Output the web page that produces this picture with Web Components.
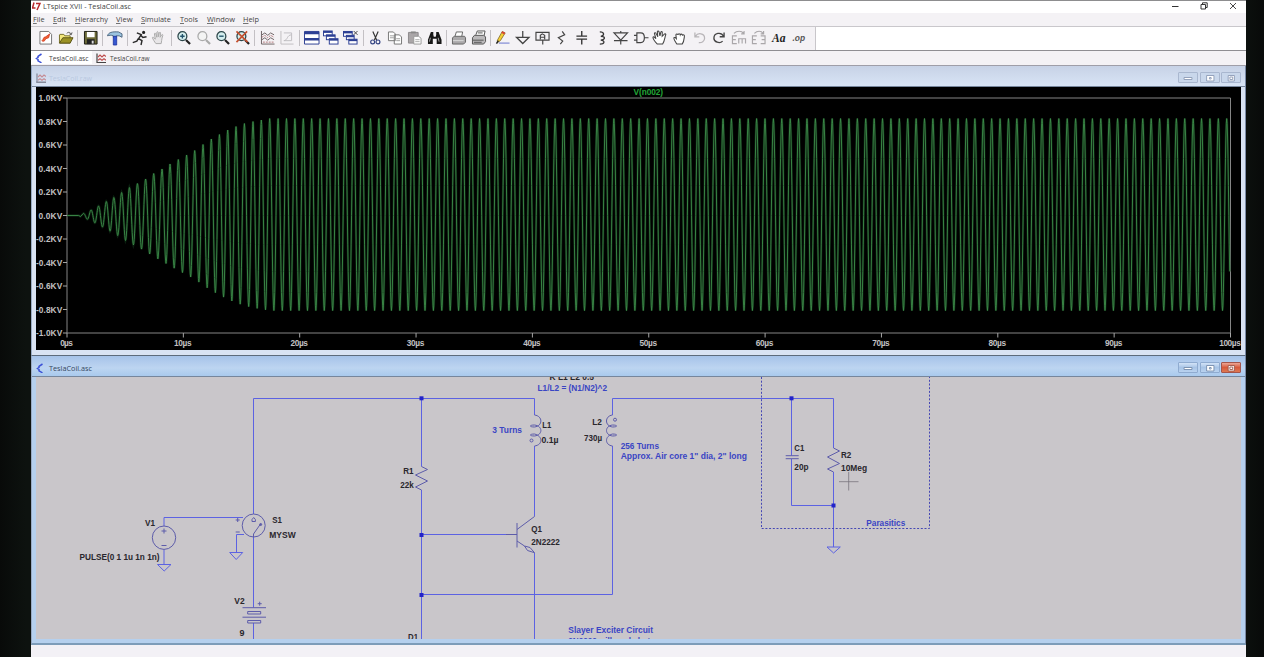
<!DOCTYPE html>
<html lang="en">
<head>
<meta charset="utf-8">
<title>LTspice XVII - TeslaCoil.asc</title>
<style>
html,body{margin:0;height:100%;overflow:hidden;background:#0a0d0c;font-family:"Open Sans","Noto Sans",sans-serif}
</style>
</head>
<body>
<spice-app></spice-app>
<script>
const define = (name, render) => customElements.define(name, class extends HTMLElement {
  connectedCallback() {
    if (this.shadowRoot) return;
    this.attachShadow({ mode: 'open' }).innerHTML = render(this);
  }
});

/* One line of text set to an exact width; "_" marks the access key. */
define('fit-text', el => {
  const w = +el.getAttribute('w'), size = el.getAttribute('size') || 7.4;
  const t = el.getAttribute('text').replace(/_(.)/, '<tspan text-decoration="underline">$1</tspan>');
  return `<style>:host{display:block;flex:none;width:${w}px;height:12px}svg{display:block;overflow:visible}</style>
  <svg width="${w}" height="12"><text y="9" font-size="${size}" fill="currentColor" textLength="${w}" lengthAdjust="spacingAndGlyphs">${t}</text></svg>`;
});

const mag = (c, inner) => `<path d="M10.3 10.2l4.2 4.3" stroke="${c === 'g' ? '#aaa' : '#222'}" stroke-width="2.2"/><circle cx="6.6" cy="6.4" r="4.6" fill="${c === 'g' ? '#f4f4f4' : '#d4eeee'}" stroke="${c === 'g' ? '#aaa' : '#2b4548'}" stroke-width="1.3"/>${inner}`;
const win = (x, y, w, h) => `<rect x="${x}" y="${y}" width="${w}" height="${h}" fill="#fff" stroke="#2c3f94"/><path d="M${x} ${y + 1}h${w}" stroke="#2c3f94" stroke-width="2"/>`;
const hand = 'M5 14C3.5 12 2 9.5 1.5 8c0-1 1-1 1.500 0l1.500 1.500L3.500 4c0-1 1.200-1 1.500 0l1 3.500V2.500c0-1 1.400-1 1.500 0V7l1-4c.3-1 1.500-.8 1.400.2L9.400 7.500l1.600-2.500c.6-.8 1.600-.2 1.200.7-.8 2-1 3.300-1.200 5L10.500 14z';
const ICONS = {
  new: '<path d="M2 1.500h9l3 3v10H2z" fill="#fff" stroke="#666" stroke-width=".9"/><path d="M4 11c2-1 1-4 4-4l4-3-1 4-3 1c-1 3-3 3-4 2z" fill="#f0642f" stroke="#cf3320" stroke-width=".8"/>',
  open: '<path d="M1.500 5V13.500h11V6H7L6 4.500H2z" fill="#f4e87d" stroke="#77702b"/><path d="M1.500 13.500L5 8h10.500l-3 5.500z" fill="#9b9225" stroke="#5b5516"/><path d="M9 3.500c2-2 4-1 4.500 1M14.500 2.500l-.8 2.300-2-.8" fill="none" stroke="#555"/>',
  save: '<path d="M1.500 1.500h13v13h-13z" fill="#6d6b38" stroke="#1d1d14"/><path d="M4 2h8v5.500H4z" fill="#fff"/><path d="M4 9.500h8v5H4z" fill="#222"/><path d="M9 11h2v3H9z" fill="#ddd"/>',
  hammer: '<path d="M.5 6C1.500 2.500 5 1.500 12 2L15.500 4v3.500l-3-1.500H9.500v1.500h-3V6C4 5 2.500 5.500.5 6z" fill="#9cc3df" stroke="#445d76" stroke-width=".9"/><path d="M6.500 6.500h3.500v9H6.500z" fill="#3558d0" stroke="#1b2f9d" stroke-width=".8"/>',
  run: '<circle cx="12" cy="2.500" r="1.600" fill="#222"/><path d="M5 3l4.500 1.700-2.700 4.300 3.500 2-1 4.500M6.500 9L5 11.500.8 13M9 5.500l2.200 2.300 3.800-.8" fill="none" stroke="#2c2c2c" stroke-width="1.500"/>',
  halt: `<path d="${hand}" fill="#e8e6e8" stroke="#aaa"/>`,
  zin: mag('k', '<path d="M4.300 6.400h4.600M6.600 4.100v4.600" stroke="#23536b" stroke-width="1.400"/>'),
  zpan: mag('g', ''),
  zout: mag('k', '<path d="M4.300 6.400h4.600" stroke="#23536b" stroke-width="1.400"/>'),
  zfit: mag('k', '<path d="M1.500 1.500L13 12.500M12.500 1.500l-11 11" stroke="#c4502f" stroke-width="1.700"/>'),
  auto: '<path d="M1.500 1v13.500H15M2 5l3-2 3 2.500L11 3l3.500 2M2 10l3-2 3 2.500L11 8l3.500 2" fill="none" stroke="#6d6264"/><path d="M2 7.500l3-2 3 2.500 3-2.500 3.500 2M3 12.500h12" fill="none" stroke="#b4797c" stroke-dasharray="2 1"/>',
  plot: '<path d="M2 1v13.500h13M5 3h8v8H5M5 11c4 0 3-6 8-6" fill="none" stroke="#c0bec2"/>',
  tile: `<path d="M.5 1.500h15v13H.5z" fill="#fff" stroke="#2c3f94"/><path d="M.5 3h15M.5 9.500h15" stroke="#2c3f94" stroke-width="2.600"/>`,
  casc: win(.5, 1, 9, 5) + win(3.5, 5, 9, 5) + win(6.500, 9, 9, 5.500),
  close: win(.5, 1.5, 9, 5) + win(3.500, 5.500, 8, 4.500) + win(6, 9.500, 8.500, 5) + '<path d="M11 1l4 4M15 1l-4 4" stroke="#444"/>',
  cut: '<path d="M5 1.500l4 9M10.500 1.500l-4 9" stroke="#333" stroke-width="1.200"/><circle cx="4.800" cy="12.300" r="2" fill="none" stroke="#304080" stroke-width="1.200"/><circle cx="10.300" cy="12.300" r="2" fill="none" stroke="#304080" stroke-width="1.200"/>',
  copy: '<path d="M1.500 2h5l2 2v7h-7zM7.500 5h5l2.500 2v7.500H7.500z" fill="#fff" stroke="#777"/><path d="M3 6h4M3 8h4M9.500 9h4M9.500 11h4" stroke="#888" stroke-width=".8"/>',
  paste: '<path d="M1.500 2.500h10v11h-10z" fill="#aaa6a8" stroke="#8c898c"/><path d="M4 1.500h5v2H4z" fill="#888"/><path d="M7 6.500h5l2.500 2v6H7z" fill="#fff" stroke="#999"/><path d="M8.500 10h4.500M8.500 12h4.500" stroke="#999" stroke-width=".8"/>',
  find: '<path d="M4 2h2.500v3L7 7h2l.5-2V2H12l3 8v4.500h-5V9H6v5.500H1V10z" fill="#171717"/><path d="M3.500 8l-1 4M11.500 8l1 4" stroke="#aaa"/>',
  print: '<path d="M4 7l1.500-5h6.500l-1 5" fill="#fff" stroke="#666"/><path d="M1.500 8l2-1.500H14L15 8v4.500l-2 2H1.500z" fill="#aaa8aa" stroke="#666"/><path d="M2 11h11" stroke="#ddd"/>',
  setup: '<path d="M5 5l1.500-4h8l-1 5" fill="#fff" stroke="#555"/><path d="M1.500 8l2-2.500H13L15 7v5l-2 2.500H1.500z" fill="#bbb9bb" stroke="#555"/><path d="M2 10.500h11M3 12.700h8M7 3h5" stroke="#555"/>',
  wire: '<path d="M2.500 10.500L7.500 1.500l3 1.500-5 8-3 2z" fill="#f5cf35" stroke="#7c6422" stroke-width=".8"/><path d="M7.500 1.200l3 1.700-1 1.700-3-1.700z" fill="#d84438"/><path d="M1.500 14l2-3" stroke="#222" stroke-width="1.500"/><path d="M4 13.500h11" stroke="#6673cc"/>',
  gnd: '<path d="M8 1v6M1.500 7.500h13L8 14z" fill="none" stroke="#444" stroke-width="1.300"/>',
  label: '<path d="M1 2.500h13.500v8H1zM8 10.500V15M5.500 9.500V5.500l2-1.500 2.500 1.500v4M5.500 7.500H10" fill="none" stroke="#444" stroke-width="1.200"/>',
  res: '<path d="M8.500 1.500L11 5 4.500 8l4.500 3.500-2.500 3" fill="none" stroke="#444" stroke-width="1.200"/>',
  cap: '<path d="M8 1v5M8 9.500V15M2.500 6.300h11M2.500 9.400h11" fill="none" stroke="#333" stroke-width="1.400"/>',
  ind: '<path d="M6 2c5 0 5 4 1 4.500 5 0 5 3.500 0 4 5 .5 4 4-1 4" fill="none" stroke="#333" stroke-width="1.300"/>',
  dio: '<path d="M1 3h14L8 10.500zM1 11h14M8 1v2M8 11v4" fill="none" stroke="#444" stroke-width="1.200"/>',
  gate: '<path d="M4 3h4c5 0 5 10 0 10H4zM1 5.500h3M1 10.500h3M12 8h4" fill="none" stroke="#444" stroke-width="1.200"/>',
  move: `<path d="M5.500 14.500C3 12 1 9 1 7.500c.5-1 1.500-.5 3 1.500L2.500 3.500c0-1 1.300-1 1.700 0L6 7 5.500 1.800c.2-1 1.400-1 1.700 0L8.200 6l1-4c.4-.8 1.400-.6 1.400.3L10.500 6.500 13 4c.8-.5 1.500.2 1.200 1-1 2-1 6-3.200 9.500z" fill="#fff" stroke="#444" stroke-width="1.100"/>`,
  drag: '<path d="M5 14.500C3.500 12 1.500 9.500 2 8c1-1 2 .5 2.500 1L4 5c.5-1.500 2-1 2.200 0 .2-1.500 2-1.500 2.300 0 .4-1 2-1 2.300.3 1-.8 2.200 0 2 1.200C12.500 9 12.500 12 10.500 14.500z" fill="#fff" stroke="#444" stroke-width="1.100"/>',
  undo: '<path d="M3 2.500V7h4.500M3.500 6.500C6 2.500 13 3 13 8.500c0 3-3 5-6 4.500" fill="none" stroke="#b8b5b8" stroke-width="1.300"/>',
  redo: '<path d="M13.500 2.500V7H9M13 6.500C10.500 1.500 3 3 3 8.500c0 4 6 6 9 3" fill="none" stroke="#444" stroke-width="1.400"/>',
  mirror: '<path d="M6 6H1.500v8H6M1.500 10H5M8 14V9h7v5M11.500 9v5M3 3.500c3-3 8-3 10 0M13.500 1v3h-3" fill="none" stroke="#aaa7aa" stroke-width="1.200"/>',
  rotate: '<path d="M6 6H1.500v8H6M1.500 10H5M10 6h4.500v8H10M14.500 10H11M3.500 3.500c3-3 7-3 9 0M13 1v3h-3" fill="none" stroke="#aaa7aa" stroke-width="1.200"/>',
  text: '<text x="2" y="12.500" font-family="Liberation Serif,serif" font-style="italic" font-weight="700" font-size="13" fill="#222" textLength="14" lengthAdjust="spacingAndGlyphs">Aa</text>',
  op: '<text x="2.500" y="11" font-family="Liberation Sans,sans-serif" font-style="italic" font-weight="700" font-size="10" fill="#555" textLength="13" lengthAdjust="spacingAndGlyphs">.op</text>'
};
define('tool-icon', el => `<style>:host{display:flex;flex:none;width:19.63px;justify-content:center}svg{display:block;width:15.500px;height:15.500px;overflow:visible}</style>
  <svg viewBox="0 0 16 16" fill="none">${ICONS[el.getAttribute('name')]}</svg>`);
define('tool-sep', () => `<style>:host{display:flex;flex:none;width:5px;justify-content:center}i{width:1px;height:16px;background:#c3c0c4}</style><i></i>`);

define('tool-bar', () => {
  const items = 'new open | save | hammer | run halt | zin zpan zout zfit | auto plot | tile casc close | cut copy paste find | print setup | wire gnd label res cap ind dio gate move drag undo redo mirror rotate text op'.split(' ');
  return `<style>:host{display:flex;height:23px;border-top:1px solid #c9c7cb;border-bottom:1px solid #8f8e92;background:#fff}
  div{display:flex;align-items:center;box-sizing:border-box;width:785px;padding:0 0 1px 5.200px;background:#f4f2f5;border-right:1px solid #c8c6ca}</style>
  <div>${items.map(n => n === '|' ? '<tool-sep></tool-sep>' : `<tool-icon name="${n}"></tool-icon>`).join('')}</div>`;
});

define('title-bar', () => `<style>:host{display:flex;align-items:center;height:12px;border-top:1px solid #8d8d8f;background:#fff;color:#444;padding-right:8px}
  .logo{width:9px;height:9px;margin:0 2px 2px 1px}fit-text{margin:0 auto 2px 0}.c{width:10px;height:10px;margin:0 0 3px 19px}</style>
  <svg class="logo" viewBox="0 0 9 9"><path d="M2 .5L0.500 6H3.500M4 1.500H8L5 8" stroke="#b72a2d" stroke-width="1.500" fill="none"/></svg>
  <fit-text text="LTspice XVII - TeslaCoil.asc" w="88" size="7.500"></fit-text>
  <svg class="c" viewBox="0 0 10 10"><path d="M2 5.500h6.500" stroke="#333"/></svg>
  <svg class="c" viewBox="0 0 10 10" fill="none" stroke="#333"><path d="M2 3.500h4.500V8H2zM3.500 3.500V1.800H8.200V6.500H6.500"/></svg>
  <svg class="c" viewBox="0 0 10 10"><path d="M2 2l6 6M8 2L2 8" stroke="#333" stroke-width=".9"/></svg>`);

define('menu-bar', () => {
  const m = [['_File', 11.5, 8.5], ['_Edit', 13, 8.5], ['_Hierarchy', 33, 8.7], ['_View', 16.5, 8.5], ['_Simulate', 29.8, 8.6], ['_Tools', 18, 9], ['_Window', 28, 8.7], ['_Help', 16, 0]];
  return `<style>:host{display:flex;height:13px;padding-left:2px;background:#f4f2f5;color:#444}</style>` +
    m.map(([t, w, g]) => `<fit-text text="${t}" w="${w}" style="margin-right:${g}px"></fit-text>`).join('');
});

const MOON = '<path d="M6.500 1L3 3.300V4.500L1.500 5.500 3 6.500V7.800L6.500 9.800" fill="none" stroke="#3b50d6" stroke-width="1.500"/>';
const RAW = c => `<path d="M1 .5v9h9" fill="none" stroke="${c}" stroke-width="1.200"/><path d="M2 4l2-2 2 2 2-2 2 1.500M2 7.300l2-1.500 2 1.500 2-1.500 2 1.500" fill="none" stroke="#bd4b4b" stroke-width="1.100"/>`;

define('doc-tabs', () => `<style>:host{display:flex;height:14px;background:#f4f2f5;border-bottom:1px solid #9f9ea8;color:#444}
  div{display:flex;align-items:center;padding:0 4px 0 4px;height:13px}.on{background:#fff;width:53px}svg{width:10px;height:10px;margin-right:4px;flex:none}</style>
  <div class="on"><svg viewBox="0 0 10 10">${MOON}</svg><fit-text text="TeslaCoil.asc" w="39.500" size="7"></fit-text></div>
  <div><svg viewBox="0 0 10 10">${RAW('#444')}</svg><fit-text text="TeslaCoil.raw" w="39.500" size="7"></fit-text></div>`);

define('win-button', el => {
  const hot = el.hasAttribute('hot'), dim = el.hasAttribute('dim');
  const g = { min: '<path d="M4.500 6.500h7v-2h-7z"/>', max: '<path d="M5 2.500h6.500V8H5zM7.500 4.500h1.500V6H7.500z"/>', close: '<path d="M5.500 2.500h5.500V8H5.500zM7 4h2.500v2.500H7z"/>' }[el.getAttribute('kind')];
  return `<style>:host{display:block;width:20px;height:11px;box-sizing:border-box;border:1px solid ${hot ? '#a4554b' : dim ? '#a9b7cf' : '#8fabd0'};border-radius:1px;
  background:${hot ? 'linear-gradient(#eda695,#d75a3c 50%,#dd7852)' : dim ? '#c9d7eb' : 'linear-gradient(#d3e3f7,#a8c4e6 50%,#b9d2ef)'}}svg{display:block;width:18px;height:10px}</style>
  <svg viewBox="0 0 16 10" preserveAspectRatio="none" fill="#fff" stroke="${hot ? '#9a5145' : dim ? '#8796b2' : '#6f86a8'}" stroke-width=".8">${g}</svg>`;
});

/* MDI child window: caption above the slotted client area. */
define('mdi-window', el => {
  const act = el.hasAttribute('active');
  return `<style>:host{display:flex;flex-direction:column;box-sizing:border-box;padding:0 4px;background:${act ? '#b5d0ee' : '#d9e3f3'};border-left:1px solid #9aabc4;border-right:1px solid #7a8aa6}
  header{display:flex;align-items:center;height:21px;margin:0 -4px;padding:3px 4px 0 4px;box-sizing:border-box;gap:3px;color:${act ? '#344660' : '#b9c8e0'};
  background:${act ? 'linear-gradient(#a6c3e9,#bdd5f1 60%,#a9c9ed)' : 'linear-gradient(#c7d2e6,#d8e4f5)'};border-bottom:1px solid #76869c}
  header>svg{width:10px;height:10px;flex:none;opacity:${act ? 1 : .55}}fit-text{margin-right:auto;flex:none}.b{display:flex;gap:1.500px}</style>
  <header><svg viewBox="0 0 10 10">${act ? MOON : RAW('#445') + '<path d="M0 9h10" stroke="#445"/>'}</svg>
  <fit-text text="${el.getAttribute('caption')}" w="43" size="7.200"></fit-text>
  <div class="b"><win-button kind="min" ${act ? '' : 'dim'}></win-button><win-button kind="max" ${act ? '' : 'dim'}></win-button><win-button kind="close" ${act ? 'hot' : 'dim'}></win-button></div></header>
  <slot></slot>`;
});

define('wave-plot', () => {
  const X0 = 67, Y0 = 215.5;
  // Crest positions and amplitudes while the oscillation builds up, then a steady period.
  const start = [[83.3, 2], [91, 5.5], [98.5, 9.5], [106.3, 14], [113.8, 18], [121.6, 23], [129.4, 28], [137.4, 32], [145.600, 36.5], [153.700, 42], [162, 46.5], [170, 51.5], [178.3, 56], [186.600, 60.500], [194.700, 65], [203, 71], [211.300, 76.500], [219.400, 81], [227.700, 85.500], [236, 89], [244.400, 92], [253, 94], [261.300, 95.500]];
  const P = start.slice();
  for (let x = 269.7; x < 1240; x += 8.395) P.push([x, 97]);
  let d = `M${X0} ${Y0}L78.600 ${Y0}L80.500 ${Y0 + 1}`;
  for (let i = 0; i < P.length - 1; i++) {
    const [a, A] = P[i], [b, B] = P[i + 1];
    for (let k = 0; k < 20; k++) {
      const f = k / 20, x = a + (b - a) * f;
      if (x > 1230) break;
      const amp = A + (B - A) * f, c = Math.cos(2 * Math.PI * f);
      d += `L${x.toFixed(2)} ${(Y0 - amp * c * (c < 0 ? .98 : 1)).toFixed(1)}`;
    }
  }
  let s = '';
  for (let i = 0; i <= 10; i++) {
    const v = 1 - i * .2, y = 98 + i * 23.5, lab = Math.abs(v).toFixed(1) + 'KV';
    s += `<path d="M63 ${y}h4" stroke="#a5a5a5"/>`;
    s += v < -.01 ? `<text x="36" y="${y + 3}" textLength="26.200">-${lab}</text>` : `<text x="38.500" y="${y + 3}" textLength="23.700">${lab}</text>`;
    const x = X0 + i * 116.35, w = i === 0 ? 12.5 : i === 10 ? 21.5 : 17.5;
    s += `<path d="M${x} 333v4.500" stroke="#a5a5a5"/><text x="${x - w / 2 - .5}" y="346" textLength="${w}">${i * 10}µs</text>`;
  }
  return `<style>:host{display:block;height:263px;background:#000}svg{display:block}text{font:bold 8.300px "Liberation Sans",sans-serif;fill:#c2c0c2}</style>
  <svg width="1205" height="263" viewBox="36 87 1205 263">
  <path d="M67 98H1230.500V333H67z" fill="none" stroke="#858585"/>
  <path d="${d}" fill="none" stroke="#143d1d" stroke-width="2.400" stroke-opacity=".5"/>
  <path d="${d}" fill="none" stroke="#3d8d4a" stroke-width=".9"/>
  ${s}<text x="633.500" y="95" textLength="29.500" style="fill:#22a637">V(n002)</text></svg>`;
});

define('schematic-view', () => {
  const k = [['V1', 145, 525.5, 10], ['PULSE(0 1 1u 1n 1n)', 79.5, 559.5, 80], ['S1', 272.3, 523.2, 9.7], ['MYSW', 269.3, 538, 26.4], ['V2', 234.3, 603.6, 10.3], ['9', 239.5, 636.3, 5],
    ['K L1 L2 0.5', 549.5, 380, 44.5], ['L1', 542.3, 428, 9], ['0.1µ', 541.500, 442.600, 17], ['L2', 592.3, 425.3, 9.700], ['730µ', 584, 440.7, 18], ['R1', 403.3, 474.3, 10.300], ['22k', 400.300, 487.500, 13.500],
    ['Q1', 531.3, 531.7, 10.700], ['2N2222', 531.3, 545, 28.500], ['D1', 408, 639.500, 10], ['C1', 794.300, 451.200, 10], ['20p', 794.300, 470, 14.200], ['R2', 841, 457.500, 10.300], ['10Meg', 841, 471.200, 26.200]];
  const b = [['L1/L2 = (N1/N2)^2', 537.500, 391.300, 69.500], ['3 Turns', 492.300, 433.300, 29.700], ['256 Turns', 620.700, 448.700, 38.300], ['Approx. Air core 1&quot; dia, 2&quot; long', 620.700, 458.800, 126.300],
    ['Parasitics', 866.300, 526, 39], ['Slayer Exciter Circuit', 568.300, 633.300, 84.700], ['2N2222 will work, but', 568.300, 643.700, 82]];
  const T = (l, f) => l.map(([t, x, y, w]) => `<text x="${x}" y="${y}" textLength="${w}" lengthAdjust="spacingAndGlyphs" fill="${f}">${t}</text>`).join('');
  return `<style>:host{display:block;height:262px;background:#c9c6ca}svg{display:block}text{font:bold 8.800px "Liberation Sans",sans-serif;stroke:none}</style>
  <svg width="1205" height="262" viewBox="36 377 1205 262" fill="none" stroke="#5c62e2" stroke-width="1">
  <path d="M253.500 514V398.500H534.500V415M421.500 398.500V466.500M421.500 490V640M421.500 534.500H506M534.500 446V516.500M534.500 553V640M421.500 594.500H612.500V446M612.500 415V398.500H833.500V448M791.500 398.500V455.500M791.500 459V505.500H833.500M833.500 472V547M164 526V517.500H243M236.500 552.500V534.500H244M164 549.500V564.500M253.500 537V607.500M253.500 623V640"/>
  <path d="M157.500 564.500H171L164.200 571zM229.700 552.500H242.700L236.200 559.500zM827 547H840.300L833.600 553z"/>
  <g stroke="#5d5caa">
  <circle cx="164" cy="537.700" r="11.700"/><path d="M161.500 531h5M164 528.500v5M161.500 545.500h5"/>
  <circle cx="253.700" cy="525.500" r="11.500"/><path d="M253.500 537v-3l7-10M252 521.500v-2l1.700-2 1.700 2v2zM235.700 520h4M237.700 518v4M235.700 532h4"/><circle cx="260.700" cy="524.500" r="1" fill="#5d5caa"/>
  <path d="M242.500 607.700H266M247.700 611.500h13v2.500h-13zM242.500 617.200H266M247.700 620.500h13v2.500h-13zM257.700 603.700h4M259.700 601.700v4"/>
  <path d="M421.500 466.500L427.500 469.500 415.500 475 427.500 481 415.500 487 421.500 490M833.500 448L839.500 451 827.500 457 839.500 463.500 827.500 469 833.500 472M785.700 455.700h13M785.700 458.700h13"/>
  <path d="M534.500 415C543 416 543 426 534.500 427C529 427 529 425 534.500 425C543 426 543 435 534.500 436C529 436 529 434 534.500 434C543 436 543 445 534.500 446"/><circle cx="531.500" cy="440.500" r="1.500"/>
  <path d="M612.500 415C604.500 416 604.500 426 612.500 427C618 427 618 425 612.500 425C604.500 426 604.500 435 612.500 436C618 436 618 434 612.500 434C604.500 436 604.500 445 612.500 446"/><circle cx="615" cy="419.700" r="1.500"/>
  <path d="M506 534.500H517M517 523V547.500M517 529.500L534.500 516.500M517 541L524.500 546M524.500 546L530 547.500 534.500 552.700 527.500 550.500z"/></g>
  <path d="M761.500 377V528.500H929.500V377" stroke="#4547b4" stroke-dasharray="2 1.700"/>
  <path d="M839 481.700h19.500M848.700 472v18.500" stroke="#77747c" stroke-width=".8"/>
  <g fill="#2323c8" stroke="none">${[[421.5, 398.3], [421.5, 535], [421.5, 595], [791.5, 398.3], [833.5, 505.5]].map(([x, y]) => `<rect x="${x - 2}" y="${y - 2}" width="4" height="4"/>`).join('')}</g>
  ${T(k, '#29272d')}${T(b, '#3a45c4')}</svg>`;
});

define('spice-app', () => `<style>
  :host{display:flex;justify-content:center;height:657px;padding:0 18px 0 31px;background:linear-gradient(90deg,#080a09,#0d120f 2%,#0d120f 98%,#080a09)}
  main{flex:1;display:flex;flex-direction:column;background:#f3f1f6;overflow:hidden}
  .one{height:290px;border-bottom:1px solid #5d6b7c}.two{height:289px;border-bottom:2px solid #7d9cb9}</style>
  <main><title-bar></title-bar><menu-bar></menu-bar><tool-bar></tool-bar><doc-tabs></doc-tabs>
  <mdi-window class="one" caption="TeslaCoil.raw"><wave-plot></wave-plot></mdi-window>
  <mdi-window class="two" caption="TeslaCoil.asc" active><schematic-view></schematic-view></mdi-window></main>`);
</script>
</body>
</html>
